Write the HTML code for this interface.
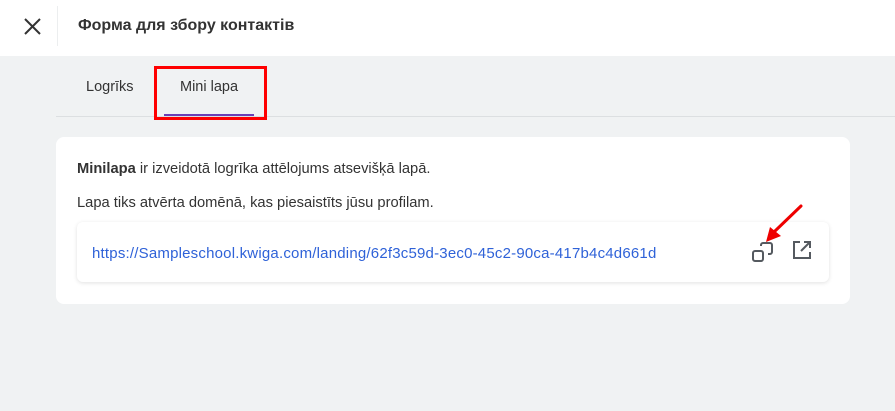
<!DOCTYPE html>
<html><head><meta charset="utf-8"><style>
body{margin:0;width:895px;height:411px;background:#f0f2f3;font-family:"Liberation Sans",sans-serif;position:relative;overflow:hidden}
.hdr{position:absolute;left:0;top:0;width:895px;height:56px;background:#fff}
.sep{position:absolute;left:57px;top:6px;width:1px;height:40px;background:#eceeef}
.title{position:absolute;left:78px;top:17px;font-size:16px;color:#333;font-weight:bold;letter-spacing:0px}
.tab{position:absolute;font-size:14.5px;color:#333;top:79px}
.line{position:absolute;left:56px;top:116px;width:839px;height:1px;background:#dcdfe1}
.ul{position:absolute;left:164px;top:114px;width:90px;height:2px;background:#6a3fb5}
.red{position:absolute;left:154px;top:66px;width:113px;height:54px;border:3px solid #f00;box-sizing:border-box}
.card{position:absolute;left:56px;top:137px;width:794px;height:167px;background:#fff;border-radius:8px}
.t{position:absolute;left:77px;font-size:14.7px;color:#333}
.link{position:absolute;left:77px;top:222px;width:752px;height:60px;background:#fff;border-radius:6px;box-shadow:0 1px 4px rgba(0,0,0,.12)}
.url{position:absolute;left:15px;top:23px;font-size:15px;letter-spacing:0.2px;color:#2f62d8}
</style></head><body>
<div class="hdr">
<svg style="position:absolute;left:24px;top:18px" width="17" height="17" viewBox="0 0 17 17"><path d="M1 1L16 16M16 1L1 16" stroke="#333" stroke-width="2"/></svg>
<div class="sep"></div>
<div class="title">Форма для збору контактів</div>
</div>
<div class="tab" style="left:86px">Logrīks</div>
<div class="tab" style="left:180px">Mini lapa</div>
<div class="line"></div><div class="ul"></div>
<div class="red"></div>
<div class="card"></div>
<div class="t" style="top:161px"><b>Minilapa</b> ir izveidotā logrīka attēlojums atsevišķā lapā.</div>
<div class="t" style="top:195px">Lapa tiks atvērta domēnā, kas piesaistīts jūsu profilam.</div>
<div class="link"><div class="url">https://Sampleschool.kwiga.com/landing/62f3c59d-3ec0-45c2-90ca-417b4c4d661d</div>
<svg style="position:absolute;left:674px;top:18px" width="24" height="24" viewBox="0 0 24 24" fill="none" stroke="#555a60" stroke-width="2"><rect x="2" y="11" width="10" height="10" rx="2"/><path d="M10 6V5a2 2 0 0 1 2-2h7a2 2 0 0 1 2 2v7a2 2 0 0 1-2 2h-2"/></svg>
<svg style="position:absolute;left:714px;top:17px" width="22" height="22" viewBox="0 0 22 22" fill="none" stroke="#555a60" stroke-width="2"><path d="M9 3H3v16h16v-6M13 3h6v6M19 3l-9 9"/></svg>
</div>
<svg style="position:absolute;left:760px;top:203px" width="45" height="45" viewBox="0 0 45 45"><path d="M41 3L14 29" stroke="#e00" stroke-width="3" stroke-linecap="round"/><path d="M6 39L10 24 21 33Z" fill="#e00"/></svg>
</body></html>
